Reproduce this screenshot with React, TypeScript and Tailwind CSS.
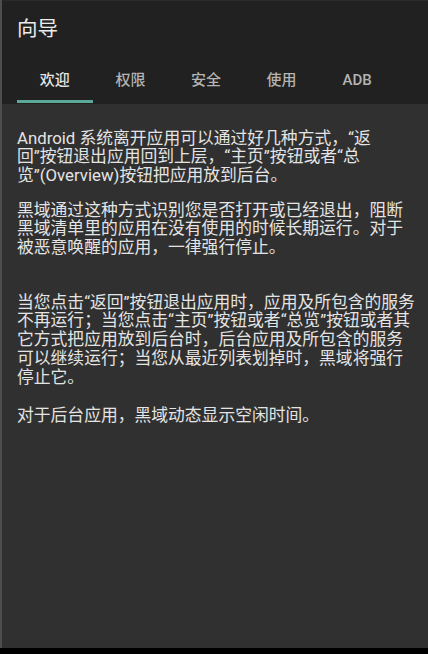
import React from "react";

const tabs = ["欢迎", "权限", "安全", "使用", "ADB"];

const paragraphs: { mt: string; lines: string[] }[] = [
  {
    mt: "mt-0",
    lines: [
      "Android 系统离开应用可以通过好几种方式，“返",
      "回”按钮退出应用回到上层，“主页”按钮或者“总",
      "览”(Overview)按钮把应用放到后台。",
    ],
  },
  {
    mt: "mt-[16px]",
    lines: [
      "黑域通过这种方式识别您是否打开或已经退出，阻断",
      "黑域清单里的应用在没有使用的时候长期运行。对于",
      "被恶意唤醒的应用，一律强行停止。",
    ],
  },
  {
    mt: "mt-[36px]",
    lines: [
      "当您点击“返回”按钮退出应用时，应用及所包含的服务",
      "不再运行；当您点击“主页”按钮或者“总览”按钮或者其",
      "它方式把应用放到后台时，后台应用及所包含的服务",
      "可以继续运行；当您从最近列表划掉时，黑域将强行",
      "停止它。",
    ],
  },
  {
    mt: "mt-[19.5px]",
    lines: ["对于后台应用，黑域动态显示空闲时间。"],
  },
];

export default function App() {
  return (
    <div
      className="w-[428px] h-[654px] flex flex-col bg-black overflow-hidden"
      style={{ fontFamily: 'Roboto, "Noto Sans CJK SC", sans-serif' }}
    >
      <div className="flex-1 flex flex-col border-l-2 border-[#4e4e4e]">
        <header className="h-[104px] bg-[#212121] flex flex-col border-t border-[#2a2a2a]">
          <h1 className="pl-[15px] pt-[16px] text-[20.5px] leading-[24px] text-[#ececec] font-normal">
            向导
          </h1>
          <nav className="mt-auto flex pl-[15px]">
            {tabs.map((t, i) => (
              <div
                key={t}
                className="w-[75.6px] h-[48px] flex flex-col items-center"
              >
                <div
                  className={
                    "flex-1 flex items-center pt-[5px] text-[15px] font-medium " +
                    (i === 0 ? "text-[#e6e6e6]" : "text-[#b4b4b4]")
                  }
                >
                  {t}
                </div>
                <div
                  className={
                    "w-full h-[3px] mb-[1px] " +
                    (i === 0 ? "bg-[#5aa898]" : "bg-transparent")
                  }
                />
              </div>
            ))}
          </nav>
        </header>
        <main className="flex-1 bg-[#303030] pl-[15px] pt-[24.5px] text-[#e4e4e4] text-[16.8px] leading-[18.7px]">
          {paragraphs.map((p, i) => (
            <div key={i} className={p.mt}>
              {p.lines.map((l, j) => (
                <div key={j} className="whitespace-nowrap">
                  {l}
                </div>
              ))}
            </div>
          ))}
        </main>
      </div>
      <div className="h-[6px] bg-black" />
    </div>
  );
}
